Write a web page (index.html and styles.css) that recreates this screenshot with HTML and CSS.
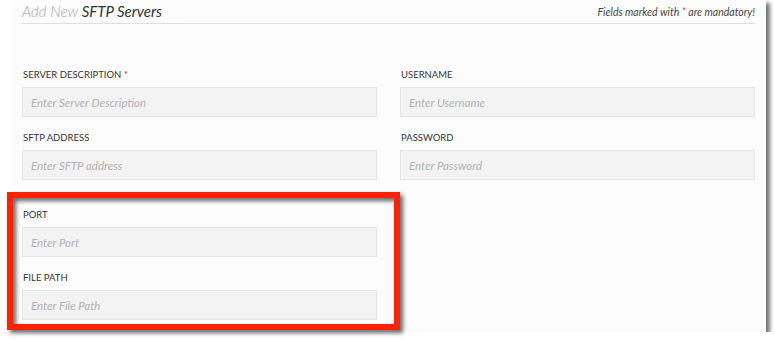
FILE: index.html
```html
<!DOCTYPE html>
<html>
<head>
    <title>Add New SFTP Servers</title>
    <link rel="stylesheet" href="styles.css">
</head>
<body>
    <div class="panel">
        <div class="panel-head">
            <h2 class="title"><span class="muted">Add New</span> SFTP Servers</h2>
            <span class="note">Fields marked with <span class="req">*</span> are mandatory!</span>
        </div>

        <form class="form-grid">
            <div class="field">
                <label>Server Description <span class="req">*</span></label>
                <input type="text" placeholder="Enter Server Description">
            </div>
            <div class="field">
                <label>Username</label>
                <input type="text" placeholder="Enter Username">
            </div>
            <div class="field">
                <label>SFTP Address</label>
                <input type="text" placeholder="Enter SFTP address">
            </div>
            <div class="field">
                <label>Password</label>
                <input type="password" placeholder="Enter Password">
            </div>
            <div class="field group-start">
                <label>Port</label>
                <input type="text" placeholder="Enter Port">
            </div>
            <div class="field group-start empty"></div>
            <div class="field">
                <label>File Path</label>
                <input type="text" placeholder="Enter File Path">
            </div>
        </form>
    </div>

    <!-- annotation frame -->
    <div class="highlight"></div>
</body>
</html>
```

FILE: styles.css
```css
body {
    margin: 0;
    background: #fff;
    font-family: 'Lato', 'Open Sans', sans-serif;
    color: #333;
}

.panel {
    margin-left: 13px;
    width: 753px;
    height: 332px;
    box-sizing: border-box;
    padding: 0 11px 0 9px;
    background: #fcfcfc;
    box-shadow: 4px 3px 4px rgba(0, 0, 0, 0.55);
}

.panel-head {
    display: flex;
    justify-content: space-between;
    align-items: flex-end;
    height: 23px;
    border-bottom: 1px solid #dedede;
}

.title {
    margin: 0 0 2px 0;
    font-size: 15px;
    font-weight: normal;
    font-style: italic;
    color: #333;
    line-height: 20px;
}

.title .muted {
    color: #a5a5a5;
    font-weight: 300;
}

.note {
    font-size: 10.5px;
    font-style: italic;
    color: #444;
    margin-bottom: 5px;
}

.req {
    color: #e8202a;
}

.form-grid {
    display: grid;
    grid-template-columns: 355px 355px;
    column-gap: 23px;
    row-gap: 14px;
    padding-top: 44px;
    margin: 0;
}

.field label {
    display: block;
    font-size: 9.5px;
    line-height: 14px;
    text-transform: uppercase;
    color: #333;
    margin-bottom: 5px;
    padding-left: 1px;
}

.field input {
    display: block;
    width: 100%;
    height: 30px;
    box-sizing: border-box;
    margin: 0;
    padding: 0 8px;
    background: #f3f3f3;
    border: 1px solid #e4e4e4;
    font-family: inherit;
    font-size: 11.5px;
    color: #333;
}

.field input::placeholder {
    color: #b2b2b2;
    font-style: italic;
}

.group-start {
    margin-top: 14px;
}

.highlight {
    position: absolute;
    left: 7px;
    top: 192px;
    width: 381px;
    height: 126px;
    border: 6px solid #ff2200;
    filter: drop-shadow(3px 3px 2px rgba(0, 0, 0, 0.6));
}
```
